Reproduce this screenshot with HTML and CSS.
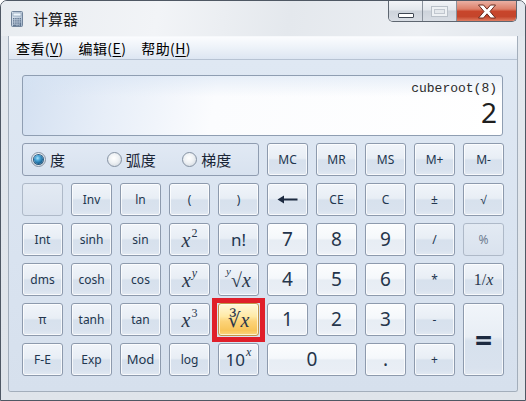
FILE: index.html
```html
<!DOCTYPE html>
<html lang="zh-CN">
<head>
<meta charset="utf-8">
<title>计算器</title>
<link rel="stylesheet" href="styles.css">
</head>
<body>
<div class="window">
  <div class="titlebar">
    <svg class="app-icon" width="12" height="16" viewBox="0 0 12 16">
      <defs>
        <linearGradient id="ib" x1="0" y1="0" x2="1" y2="1">
          <stop offset="0" stop-color="#e4ecf5"/>
          <stop offset="1" stop-color="#9fb2c8"/>
        </linearGradient>
      </defs>
      <rect x="0.5" y="0.5" width="11" height="15" rx="1" fill="url(#ib)" stroke="#71849b"/>
      <rect x="2" y="2" width="8" height="3" fill="#eef6fd" stroke="#7d93ab" stroke-width="0.6"/>
      <g fill="#5f7590">
        <rect x="2" y="7" width="1.4" height="1.4"/><rect x="4.2" y="7" width="1.4" height="1.4"/><rect x="6.4" y="7" width="1.4" height="1.4"/><rect x="8.6" y="7" width="1.4" height="1.4"/>
        <rect x="2" y="9.2" width="1.4" height="1.4"/><rect x="4.2" y="9.2" width="1.4" height="1.4"/><rect x="6.4" y="9.2" width="1.4" height="1.4"/><rect x="8.6" y="9.2" width="1.4" height="1.4"/>
        <rect x="2" y="11.4" width="1.4" height="1.4"/><rect x="4.2" y="11.4" width="1.4" height="1.4"/><rect x="6.4" y="11.4" width="1.4" height="1.4"/><rect x="8.6" y="11.4" width="1.4" height="3.6"/>
        <rect x="2" y="13.6" width="3.6" height="1.4"/><rect x="6.4" y="13.6" width="1.4" height="1.4"/>
      </g>
    </svg>
    <span class="title">计算器</span>
    <div class="controls">
      <div class="ctl min"><span class="min-glyph"></span></div>
      <div class="ctl max"><span class="max-glyph"></span></div>
      <div class="ctl close">
        <svg width="22" height="15" viewBox="0 0 22 15">
          <path d="M2.5 1 H7.5 L11 5.2 L14.5 1 H19.5 L14 7.5 L19.5 14 H14.5 L11 9.8 L7.5 14 H2.5 L8 7.5 Z" fill="#ffffff" stroke="#6b2a1d" stroke-width="1" stroke-linejoin="round"/>
        </svg>
      </div>
    </div>
  </div>
  <div class="frame">
    <div class="client">
      <div class="menubar">
        <span class="menu-item">查看(<u>V</u>)</span>
        <span class="menu-item">编辑(<u>E</u>)</span>
        <span class="menu-item">帮助(<u>H</u>)</span>
      </div>
      <div class="main">
        <div class="display">
          <div class="expr">cuberoot(8)</div>
          <div class="value">2</div>
        </div>
        <div class="keys">
          <div class="radios">
            <label class="radio"><span class="dot on"></span>度</label>
            <label class="radio"><span class="dot"></span>弧度</label>
            <label class="radio"><span class="dot"></span>梯度</label>
          </div>
          <button class="key">MC</button>
          <button class="key">MR</button>
          <button class="key">MS</button>
          <button class="key">M+</button>
          <button class="key">M-</button>

          <button class="key dis"></button>
          <button class="key">Inv</button>
          <button class="key">ln</button>
          <button class="key">(</button>
          <button class="key">)</button>
          <button class="key"><svg width="21" height="9" viewBox="0 0 21 9"><path d="M0.5 4.5 L7 0.5 V3.4 H20.5 V5.6 H7 V8.5 Z" fill="#1c2a40"/></svg></button>
          <button class="key">CE</button>
          <button class="key">C</button>
          <button class="key">±</button>
          <button class="key">√</button>

          <button class="key">Int</button>
          <button class="key">sinh</button>
          <button class="key">sin</button>
          <button class="key math"><i>x</i><sup>2</sup></button>
          <button class="key big">n!</button>
          <button class="key num">7</button>
          <button class="key num">8</button>
          <button class="key num">9</button>
          <button class="key">/</button>
          <button class="key dis">%</button>

          <button class="key">dms</button>
          <button class="key">cosh</button>
          <button class="key">cos</button>
          <button class="key math"><i>x</i><sup><i>y</i></sup></button>
          <button class="key math"><sup class="idx"><i>y</i></sup>√<i>x</i></button>
          <button class="key num">4</button>
          <button class="key num">5</button>
          <button class="key num">6</button>
          <button class="key">*</button>
          <button class="key math small">1/<i>x</i></button>

          <button class="key">π</button>
          <button class="key">tanh</button>
          <button class="key">tan</button>
          <button class="key math"><i>x</i><sup>3</sup></button>
          <button class="key math hot">∛<i>x</i></button>
          <button class="key num">1</button>
          <button class="key num">2</button>
          <button class="key num">3</button>
          <button class="key">-</button>
          <button class="key equals">=</button>

          <button class="key">F-E</button>
          <button class="key">Exp</button>
          <button class="key mod">Mod</button>
          <button class="key">log</button>
          <button class="key big">10<sup><i>x</i></sup></button>
          <button class="key num zero">0</button>
          <button class="key num">.</button>
          <button class="key">+</button>
        </div>
      </div>
    </div>
  </div>
</div>
</body>
</html>
```

FILE: styles.css
```css
* { box-sizing: border-box; }
html, body { margin: 0; padding: 0; }
body {
  width: 526px;
  height: 401px;
  overflow: hidden;
  background: #ffffff;
  font-family: "Noto Sans", "Noto Sans CJK SC", sans-serif;
}

.window {
  width: 526px;
  height: 401px;
  display: flex;
  flex-direction: column;
  border: 1px solid #4f5864;
  border-radius: 7px 7px 0 0;
  overflow: hidden;
  background: linear-gradient(180deg, #eef1f5 0%, #e3e8ee 8%, #dfe4ea 100%);
}

/* ---------- title bar ---------- */
.titlebar {
  height: 35px;
  display: flex;
  align-items: center;
  flex: none;
  background: linear-gradient(100deg, #e8ecf0 0%, #f2f4f7 30%, #e4e8ed 55%, #eceff3 80%, #e1e6ec 100%);
}
.app-icon { margin-left: 10px; flex: none; }
.title {
  margin-left: 10px;
  font: 15px "Noto Sans CJK SC", sans-serif;
  color: #1b1b1b;
}
.controls {
  margin-left: auto;
  margin-right: 8px;
  align-self: flex-start;
  display: flex;
  height: 21px;
  border: 1px solid #5e6670;
  border-top: none;
  border-radius: 0 0 5px 5px;
  overflow: hidden;
}
.ctl {
  display: flex;
  align-items: center;
  justify-content: center;
  height: 100%;
}
.min, .max {
  width: 34px;
  background: linear-gradient(180deg, #f2f4f7 0%, #e3e7ec 45%, #cdd3db 50%, #d8dde4 100%);
  border-right: 1px solid #8a929c;
}
.min { align-items: flex-end; padding-bottom: 3px; }
.min-glyph {
  width: 16px;
  height: 5px;
  background: #ffffff;
  border: 1px solid #3f4753;
  border-radius: 1px;
}
.max-glyph {
  width: 17px;
  height: 11px;
  border: 1px solid #b9c0c8;
  background: #e4e8ec;
  box-shadow: inset 0 0 0 2px #eef1f4, inset 0 0 0 3px #c1c7cf;
}
.close {
  width: 59px;
  background: linear-gradient(180deg, #eab0a3 0%, #dc806a 40%, #c8452b 52%, #c4452b 78%, #df7c60 100%);
}

/* ---------- frame & client ---------- */
.frame {
  flex: 1;
  display: flex;
  padding: 0 7px 8px 7px;
}
.client {
  flex: 1;
  display: flex;
  flex-direction: column;
  border: 1px solid #a3aebb;
  border-top: none;
  border-radius: 0 0 3px 3px;
  overflow: hidden;
}
.menubar {
  height: 24px;
  flex: none;
  display: flex;
  align-items: center;
  padding-left: 7px;
  background: linear-gradient(180deg, #fbfcfe 0%, #eef3f9 45%, #dde6f2 100%);
  border-top: 1px solid #f6f8fb;
  border-bottom: 1px solid #b7c3d3;
}
.menu-item {
  font: 14px "Noto Sans CJK SC", sans-serif;
  letter-spacing: 0.4px;
  color: #000;
  margin-right: 15px;
}
.menu-item u { text-underline-offset: 2px; }

.main {
  flex: 1;
  padding: 15px 0 0 13px;
  background: linear-gradient(180deg, #dfe8f3 0%, #d9e3f0 60%, #d6e0ed 100%);
}

/* ---------- display ---------- */
.display {
  width: 481px;
  height: 61px;
  border: 1px solid #8f9eb2;
  border-radius: 3px;
  padding: 5px 5px 0 0;
  text-align: right;
  background:
    linear-gradient(180deg, rgba(214,227,243,0.55) 0%, rgba(255,255,255,0) 35%),
    linear-gradient(100deg, #d3e0f1 0%, #e7eef8 18%, #fbfcfe 40%, #ffffff 100%);
}
.expr {
  font: 13px/15px "Liberation Mono", "DejaVu Sans Mono", monospace;
  color: #2b2b2b;
}
.value {
  font: 28px/32px "Noto Sans", sans-serif;
  color: #1f1f1f;
}

/* ---------- keypad ---------- */
.keys {
  margin-top: 7px;
  display: grid;
  grid-template-columns: repeat(10, 41px);
  grid-auto-rows: 33px;
  column-gap: 8px;
  row-gap: 7px;
}
.radios {
  grid-column: span 5;
  display: flex;
  align-items: center;
  padding-left: 8px;
  border: 1px solid #8f9cb0;
  border-radius: 3px;
  background: linear-gradient(180deg, #e1e9f4, #d8e2ef);
}
.radio {
  width: 81px;
  display: flex;
  align-items: center;
  gap: 4px;
  font: 15px "Noto Sans CJK SC", sans-serif;
  color: #1a2536;
}
.dot {
  width: 15px;
  height: 15px;
  border-radius: 50%;
  border: 1px solid #8592a3;
  background: radial-gradient(circle at 45% 40%, #ffffff 0%, #eef1f4 45%, #c9d0d9 100%);
  display: flex;
  align-items: center;
  justify-content: center;
}
.dot.on::before {
  content: "";
  width: 9px;
  height: 9px;
  border-radius: 50%;
  background: radial-gradient(circle at 40% 35%, #a8e2fb 0%, #4aa6d8 30%, #1b6799 65%, #0f3e66 100%);
  box-shadow: 0 0 0 1px #2b5a80;
}

.key {
  position: relative;
  margin: 0;
  padding: 0;
  border: 1px solid #8d9aad;
  border-radius: 3px;
  background: linear-gradient(180deg, #f1f5fa 0%, #e8eef5 46%, #d7e1ed 52%, #d9e2ee 85%, #e2e9f2 100%);
  box-shadow: inset 0 0 0 1px rgba(255,255,255,0.75);
  font: 12px "Noto Sans", sans-serif;
  color: #22364f;
  display: flex;
  align-items: center;
  justify-content: center;
  line-height: 1;
}
.key.num {
  background: linear-gradient(180deg, #fcfdfe 0%, #f5f8fb 46%, #e7edf4 52%, #e9eef5 85%, #f0f4f8 100%);
  font-size: 19px;
  color: #25354b;
}
.key.dis {
  border-color: #aeb9c8;
  background: linear-gradient(180deg, #e3eaf3, #d9e2ee);
  box-shadow: none;
  color: #6f7d91;
}
.key.big { font-size: 17px; }
.key.mod { font-size: 13px; }
.key.math {
  font-family: "Liberation Serif", "DejaVu Serif", serif;
  font-size: 20px;
  color: #2a374c;
}
.key.math.small { font-size: 16px; }
.key i { font-style: italic; font-family: "Liberation Serif", "DejaVu Serif", serif; }
.key sup {
  font-size: 12px;
  position: relative;
  top: -7px;
  vertical-align: baseline;
  margin-left: 1px;
}
.key.big sup { font-size: 12px; top: -8px; }
.key sup.idx { font-size: 11px; margin-left: 0; margin-right: 0; top: -8px; }
.key.zero { grid-column: span 2; }
.key.equals {
  grid-row: span 2;
  font-size: 30px;
  font-weight: 700;
  color: #1c2a40;
  background: linear-gradient(180deg, #f1f5fa 0%, #e8eef5 46%, #d7e1ed 52%, #d9e2ee 90%, #e0e7f0 100%);
}
.key.hot {
  border-color: #c2964a;
  background: linear-gradient(180deg, #fff8dc 0%, #ffeaa6 40%, #fcd47a 55%, #f8c55a 85%, #fbd57f 100%);
  box-shadow: inset 0 0 0 1px rgba(255,255,240,0.7);
}
.key.hot::after {
  content: "";
  position: absolute;
  top: -6px;
  left: -7px;
  right: -7px;
  bottom: -7px;
  border: 5px solid #e01f2a;
  pointer-events: none;
}
```
